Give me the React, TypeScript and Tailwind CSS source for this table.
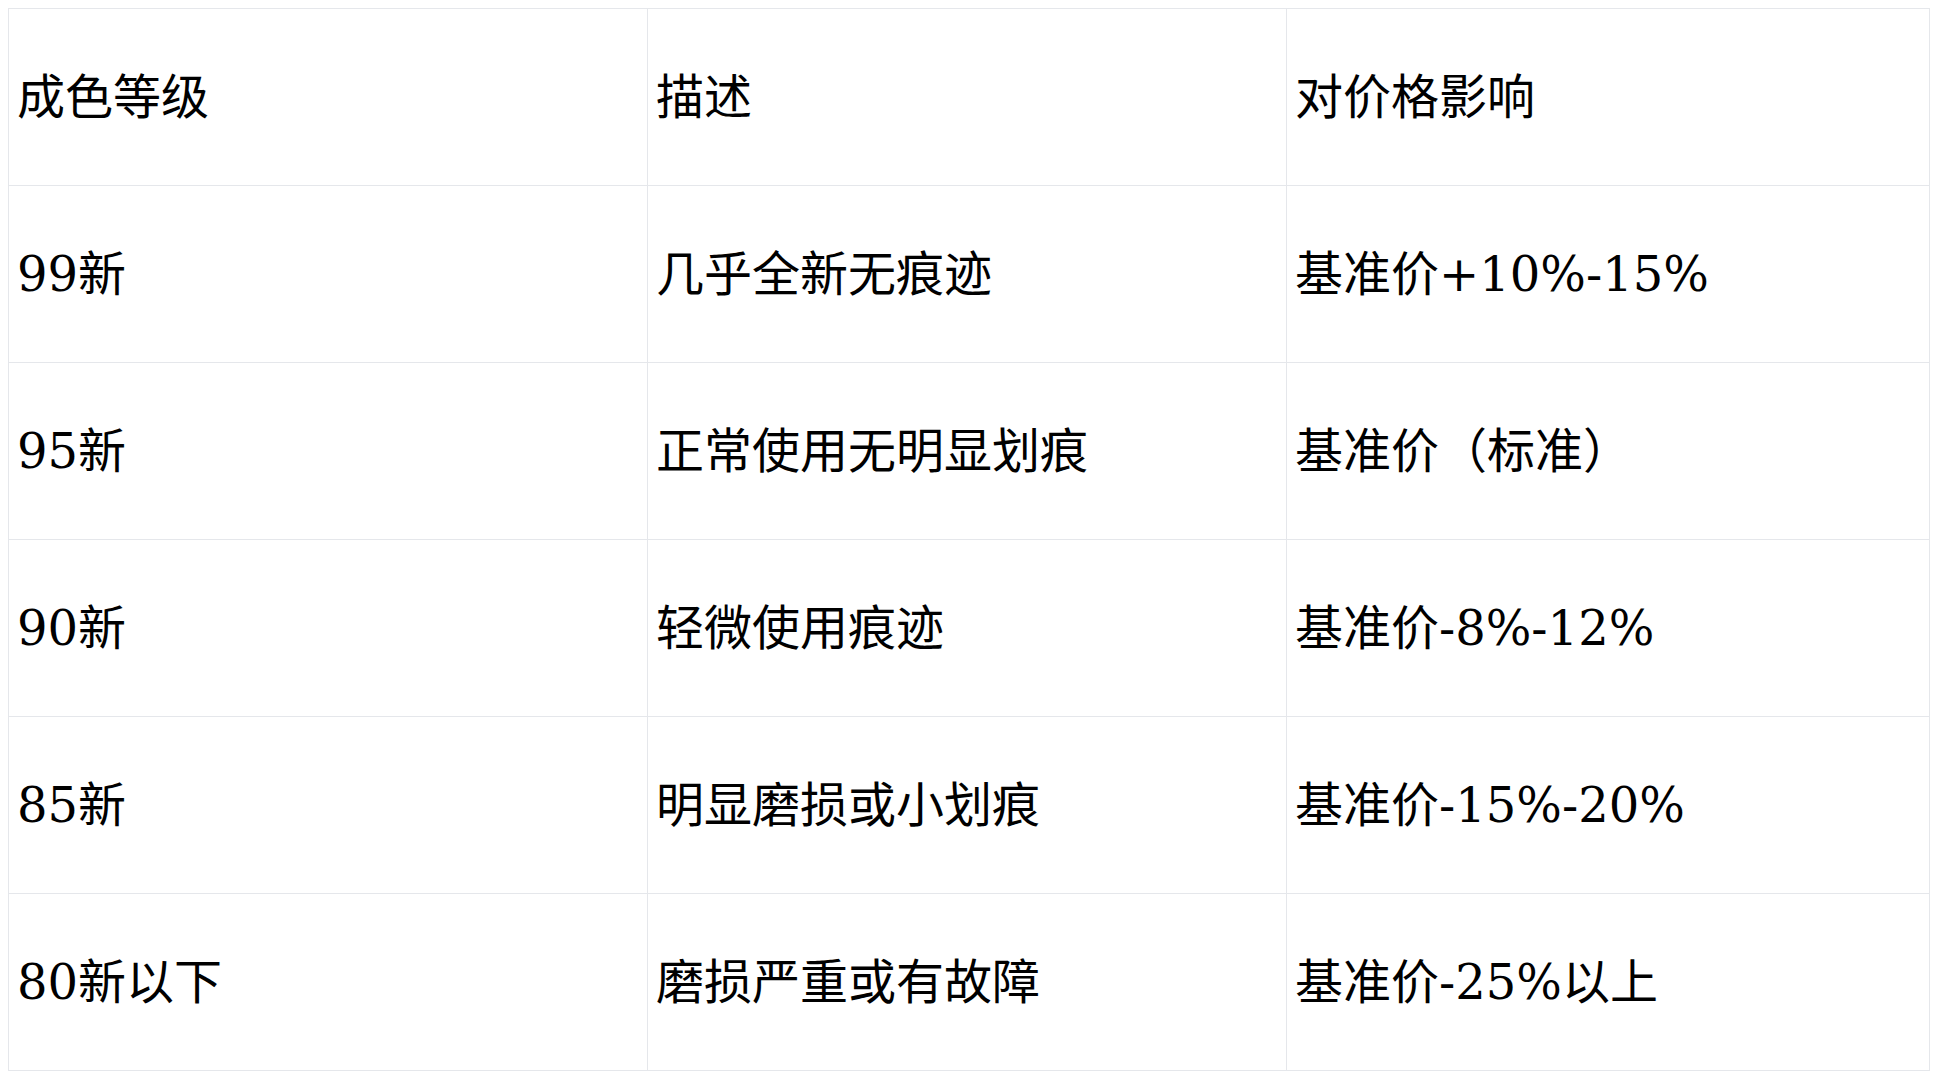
import React from "react";

const rows: [string, string, string][] = [
  ["99新", "几乎全新无痕迹", "基准价+10%-15%"],
  ["95新", "正常使用无明显划痕", "基准价（标准）"],
  ["90新", "轻微使用痕迹", "基准价-8%-12%"],
  ["85新", "明显磨损或小划痕", "基准价-15%-20%"],
  ["80新以下", "磨损严重或有故障", "基准价-25%以上"],
];

const font = { fontFamily: '"DejaVu Serif", "Noto Sans CJK SC", serif' };

export default function App() {
  return (
    <div className="bg-white min-h-screen p-2 text-black" style={font}>
      <table className="w-[1921px] table-fixed border-collapse text-[48px] leading-normal">
        <colgroup>
          <col className="w-[639px]" />
          <col className="w-[639px]" />
          <col className="w-[643px]" />
        </colgroup>
        <thead>
          <tr>
            {["成色等级", "描述", "对价格影响"].map((h) => (
              <th
                key={h}
                className="h-[177px] border border-[#e5e7eb] px-2 text-left align-middle font-normal"
              >
                {h}
              </th>
            ))}
          </tr>
        </thead>
        <tbody>
          {rows.map((r) => (
            <tr key={r[0]}>
              {r.map((c, i) => (
                <td
                  key={i}
                  className="h-[177px] border border-[#e5e7eb] px-2 text-left align-middle"
                >
                  {c}
                </td>
              ))}
            </tr>
          ))}
        </tbody>
      </table>
    </div>
  );
}
